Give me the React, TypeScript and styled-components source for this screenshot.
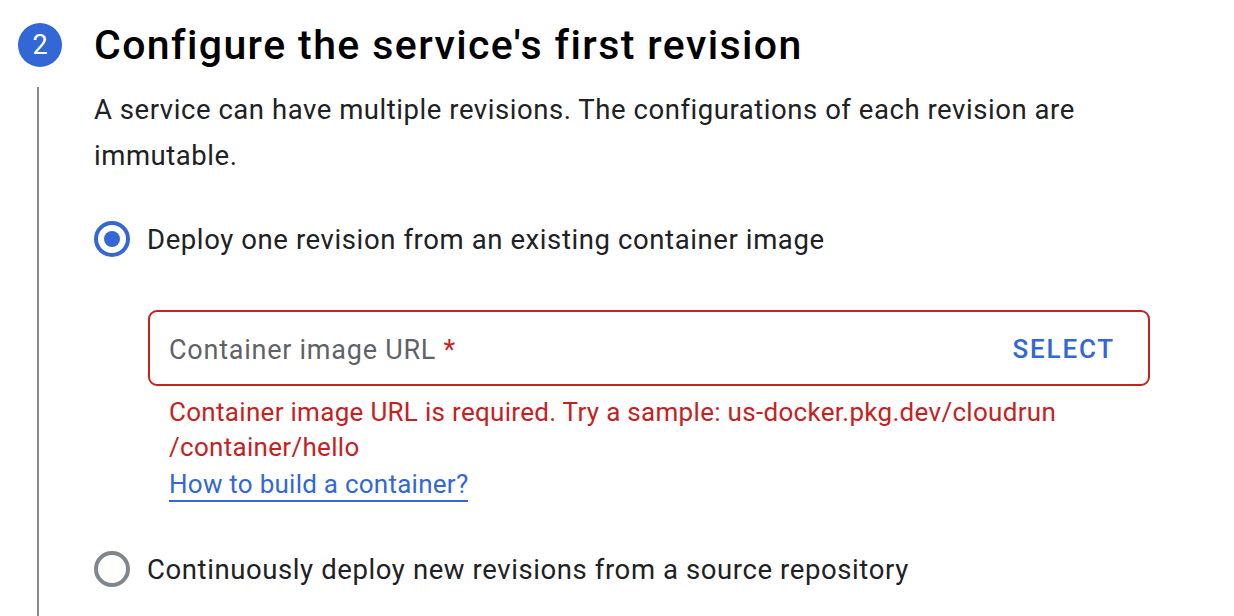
import React from "react";
import styled, { createGlobalStyle } from "styled-components";

const Global = createGlobalStyle`
  body { margin: 0; background: #fff; font-family: Roboto, "Noto Sans", Arial, sans-serif; color: #202124; }
`;

const Page = styled.div`
  padding: 23px 0 0 18px;
  width: 1234px;
  height: 616px;
  box-sizing: border-box;
  overflow: hidden;
`;

const Header = styled.div`
  display: flex;
  align-items: center;
  gap: 32px;
  height: 44px;
`;

const Badge = styled.div`
  width: 44px;
  height: 44px;
  border-radius: 50%;
  background: #3367d6;
  color: #fff;
  display: flex;
  align-items: center;
  justify-content: center;
  font-size: 27px;
  font-weight: 400;
`;

const Title = styled.h1`
  margin: 0;
  font-size: 41px;
  font-weight: 500;
  color: #000;
  letter-spacing: 1.4px;
  white-space: nowrap;
`;

const Body = styled.div`
  margin: 20px 0 0 19px;
  border-left: 2px solid #8a8a8a;
  padding-left: 55px;
  min-height: 600px;
`;

const Description = styled.p`
  margin: 0;
  font-size: 27.5px;
  line-height: 46px;
  letter-spacing: 0.55px;
  color: #202124;
  max-width: 1010px;
`;

const RadioRow = styled.label<{ $top: number }>`
  display: flex;
  align-items: center;
  gap: 17px;
  height: 40px;
  margin-top: ${(p) => p.$top}px;
  font-size: 27.5px;
  letter-spacing: 0.6px;
  color: #202124;
  white-space: nowrap;
`;

const RadioCircle = styled.span<{ $checked?: boolean }>`
  width: 36px;
  height: 36px;
  box-sizing: border-box;
  border-radius: 50%;
  border: 4px solid ${(p) => (p.$checked ? "#3367d6" : "#80868b")};
  display: flex;
  align-items: center;
  justify-content: center;
  flex-shrink: 0;
  &::after {
    content: "";
    display: ${(p) => (p.$checked ? "block" : "none")};
    width: 16px;
    height: 16px;
    border-radius: 50%;
    background: #3367d6;
  }
`;

const FieldBlock = styled.div`
  margin: 51px 0 0 54px;
  width: 1002px;
`;

const InputBox = styled.div`
  height: 76px;
  box-sizing: border-box;
  border: 2px solid #c5221f;
  border-radius: 9px;
  display: flex;
  align-items: center;
  justify-content: space-between;
  padding: 4px 33px 0 19px;
`;

const Placeholder = styled.span`
  font-size: 27px;
  letter-spacing: 0.75px;
  color: #5f6368;
`;

const Required = styled.span`
  color: #c5221f;
`;

const SelectButton = styled.span`
  font-size: 26px;
  font-weight: 500;
  color: #3367d6;
  letter-spacing: 1.8px;
  margin-top: -3px;
`;

const ErrorText = styled.div`
  padding-left: 21px;
  margin-top: 9px;
  font-size: 26px;
  line-height: 35px;
  letter-spacing: 0.3px;
  color: #c5221f;
  white-space: nowrap;
`;

const HelpLink = styled.a`
  display: inline-block;
  margin: 3px 0 0 21px;
  font-size: 26px;
  line-height: 32px;
  letter-spacing: 0.25px;
  color: #3367d6;
  text-decoration: none;
  border-bottom: 2px solid #3367d6;
`;

export default function App() {
  return (
    <>
      <Global />
      <Page>
        <Header>
          <Badge>2</Badge>
          <Title>Configure the service's first revision</Title>
        </Header>
        <Body>
          <Description>
            A service can have multiple revisions. The configurations of each revision are immutable.
          </Description>
          <RadioRow $top={40}>
            <RadioCircle $checked />
            Deploy one revision from an existing container image
          </RadioRow>
          <FieldBlock>
            <InputBox>
              <Placeholder>
                Container image URL <Required>*</Required>
              </Placeholder>
              <SelectButton>SELECT</SelectButton>
            </InputBox>
            <ErrorText>
              Container image URL is required. Try a sample: us-docker.pkg.dev/cloudrun
              <br />
              /container/hello
            </ErrorText>
            <HelpLink href="#">How to build a container?</HelpLink>
          </FieldBlock>
          <RadioRow $top={47}>
            <RadioCircle />
            Continuously deploy new revisions from a source repository
          </RadioRow>
        </Body>
      </Page>
    </>
  );
}
